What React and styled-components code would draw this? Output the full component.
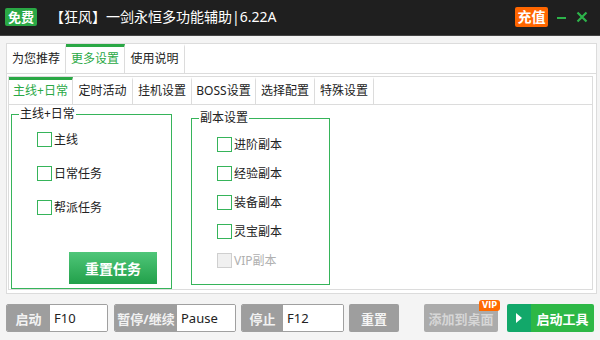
import React from 'react';
import styled, { createGlobalStyle } from 'styled-components';

const GlobalStyle = createGlobalStyle`
  html, body { margin: 0; padding: 0; }
  body {
    font-family: "Noto Sans", "Noto Sans CJK SC", sans-serif;
    font-size: 12px;
    color: #222;
  }
`;

const green = '#2aa845';
const frameGreen = '#36b45a';

const Window = styled.div`
  width: 600px;
  height: 340px;
  background: #f4f4f4;
  display: flex;
  flex-direction: column;
  overflow: hidden;
`;

const TitleBar = styled.div`
  height: 36px;
  flex-shrink: 0;
  background: #1f1f1f;
  border-bottom: 1px solid #444;
  display: flex;
  align-items: center;
  padding: 0 12px 1px 5px;
  box-sizing: border-box;
`;

const Badge = styled.span`
  display: inline-flex;
  align-items: center;
  justify-content: center;
  width: ${({ $w }) => $w}px;
  height: ${({ $h }) => $h}px;
  background: ${({ $bg }) => $bg};
  color: #fff;
  border-radius: 2px;
  font-size: ${({ $fs }) => $fs || 13}px;
  font-weight: bold;
  line-height: 1;
`;

const Title = styled.div`
  margin-left: 13px;
  color: #fff;
  font-size: 14px;
  line-height: 1;
  flex: 1;
`;

const WinButtons = styled.div`
  display: flex;
  align-items: center;
  gap: 8px;
`;

const Body = styled.div`
  padding: 7px 3px 0 6px;
`;

const OuterPanel = styled.div`
  height: 251px;
  box-sizing: border-box;
  border: 1px solid #dcdcdc;
  background: #fff;
  display: flex;
  flex-direction: column;
`;

const TabRow = styled.div`
  display: flex;
  height: ${({ $h }) => $h}px;
  border-bottom: 1px solid #dcdcdc;
  box-sizing: border-box;
  flex-shrink: 0;
`;

const Tab = styled.div`
  width: ${({ $w }) => $w}px;
  box-sizing: border-box;
  border-right: 1px solid #dcdcdc;
  border-top: 3px solid ${({ $active }) => ($active ? green : 'transparent')};
  color: ${({ $active }) => ($active ? green : '#222')};
  background: #fff;
  display: flex;
  align-items: center;
  justify-content: center;
  font-size: 12px;
  line-height: 1;
  padding-bottom: 2px;
`;

const OuterContent = styled.div`
  padding: 2px 3px 3px 1px;
  flex: 1;
  display: flex;
`;

const InnerPanel = styled.div`
  flex: 1;
  border: 1px solid #dcdcdc;
  display: flex;
  flex-direction: column;
`;

const Groups = styled.div`
  display: flex;
  align-items: flex-start;
  padding-left: 2px;
  gap: 19px;
`;

const Group = styled.div`
  position: relative;
  width: ${({ $w }) => $w}px;
  height: ${({ $h }) => $h}px;
  margin-top: ${({ $top }) => $top}px;
  box-sizing: border-box;
  border: 1px solid ${frameGreen};
  display: flex;
  flex-direction: column;
`;

const Legend = styled.span`
  position: absolute;
  top: -8px;
  left: 7px;
  background: #fff;
  padding: 0 1px;
  font-size: 12px;
  line-height: 14px;
  color: #222;
`;

const CheckList = styled.div`
  display: flex;
  flex-direction: column;
  gap: ${({ $gap }) => $gap}px;
  padding: ${({ $pt }) => $pt}px 0 0 25px;
`;

const CheckRow = styled.label`
  display: flex;
  align-items: center;
  gap: 2px;
  height: 15px;
  color: ${({ $disabled }) => ($disabled ? '#b0b0b0' : '#222')};
  font-size: 12px;
  line-height: 15px;
`;

const Box = styled.span`
  flex-shrink: 0;
  width: 15px;
  height: 15px;
  box-sizing: border-box;
  border: 1px solid ${({ $disabled }) => ($disabled ? '#cfcfcf' : frameGreen)};
  background: ${({ $disabled }) => ($disabled ? '#f0f0f0' : '#fff')};
`;

const GreenButton = styled.button`
  margin: auto 0 4px 57px;
  width: 88px;
  height: 32px;
  padding: 0;
  border: none;
  background: linear-gradient(#4fc679, #22a04a);
  color: #fff;
  font-family: inherit;
  font-size: 14px;
  font-weight: bold;
`;

const BottomBar = styled.div`
  display: flex;
  align-items: center;
  padding: 10px 0 0 6px;
`;

const KeyGroup = styled.div`
  display: flex;
  height: 28px;
  margin-right: ${({ $mr }) => $mr}px;
  border-radius: 2px;
  overflow: hidden;
  border: 1px solid #a0a0a0;
  box-sizing: border-box;
`;

const KeyLabel = styled.span`
  width: ${({ $w }) => $w}px;
  background: #9e9e9e;
  color: #f2f2f2;
  font-weight: bold;
  display: flex;
  align-items: center;
  justify-content: center;
  font-size: 13px;
`;

const KeyInput = styled.span`
  width: ${({ $w }) => $w}px;
  background: #fff;
  display: flex;
  align-items: center;
  padding-left: 4px;
  box-sizing: border-box;
  font-size: 13px;
  color: #222;
`;

const GrayButton = styled.div`
  position: relative;
  width: ${({ $w }) => $w}px;
  height: 28px;
  margin-right: ${({ $mr }) => $mr}px;
  border-radius: 2px;
  background: ${({ $light }) => ($light ? '#ababab' : '#9e9e9e')};
  color: ${({ $light }) => ($light ? '#d6d6d6' : '#f4f4f4')};
  font-weight: bold;
  display: flex;
  align-items: center;
  justify-content: center;
  font-size: 13px;
`;

const Vip = styled.span`
  position: absolute;
  top: -4px;
  right: -2px;
  background: #ff6a00;
  color: #fff;
  font-size: 8px;
  font-family: "DejaVu Sans", sans-serif;
  font-weight: bold;
  line-height: 11px;
  padding: 0 3px;
  border-radius: 3px 3px 3px 0;
`;

const StartButton = styled.div`
  display: flex;
  width: 87px;
  height: 28px;
  border-radius: 2px;
  overflow: hidden;
  color: #fff;
  font-weight: bold;
  font-size: 13px;
`;

const StartIcon = styled.span`
  width: 24px;
  background: #12a86a;
  display: flex;
  align-items: center;
  justify-content: center;
`;

const StartText = styled.span`
  flex: 1;
  background: #2db846;
  display: flex;
  align-items: center;
  justify-content: center;
`;

const outerTabs = [
  { label: '为您推荐', w: 59 },
  { label: '更多设置', w: 59, active: true },
  { label: '使用说明', w: 60 },
];

const innerTabs = [
  { label: '主线+日常', w: 64, active: true },
  { label: '定时活动', w: 60 },
  { label: '挂机设置', w: 59 },
  { label: 'BOSS设置', w: 64 },
  { label: '选择配置', w: 59 },
  { label: '特殊设置', w: 59 },
];

const dailyItems = ['主线', '日常任务', '帮派任务'];
const dungeonItems = [
  { label: '进阶副本' },
  { label: '经验副本' },
  { label: '装备副本' },
  { label: '灵宝副本' },
  { label: 'VIP副本', disabled: true },
];

const App = () => {
  return (
    <Window>
      <GlobalStyle />
      <TitleBar>
        <Badge $w={32} $h={18} $bg="#2aa845">免费</Badge>
        <Title>【狂风】一剑永恒多功能辅助|6.22A</Title>
        <WinButtons>
          <Badge $w={33} $h={20} $bg="#ff6600" $fs={14}>充值</Badge>
          <svg width="12" height="12" viewBox="0 0 12 12">
            <rect x="1" y="6" width="9" height="2" fill="#2db34a" />
          </svg>
          <svg width="12" height="12" viewBox="0 0 12 12">
            <path d="M1.5 1.5 L10.5 10.5 M10.5 1.5 L1.5 10.5" stroke="#2db34a" strokeWidth="2.2" />
          </svg>
        </WinButtons>
      </TitleBar>

      <Body>
        <OuterPanel>
          <TabRow $h={30}>
            {outerTabs.map((t) => (
              <Tab key={t.label} $w={t.w} $active={t.active}>{t.label}</Tab>
            ))}
          </TabRow>
          <OuterContent>
            <InnerPanel>
              <TabRow $h={28}>
                {innerTabs.map((t) => (
                  <Tab key={t.label} $w={t.w} $active={t.active}>{t.label}</Tab>
                ))}
              </TabRow>
              <Groups>
                <Group $w={161} $h={175} $top={9}>
                  <Legend>主线+日常</Legend>
                  <CheckList $gap={19} $pt={17}>
                    {dailyItems.map((label) => (
                      <CheckRow key={label}>
                        <Box />
                        {label}
                      </CheckRow>
                    ))}
                  </CheckList>
                  <GreenButton>重置任务</GreenButton>
                </Group>
                <Group $w={139} $h={167} $top={13}>
                  <Legend>副本设置</Legend>
                  <CheckList $gap={14} $pt={18}>
                    {dungeonItems.map((item) => (
                      <CheckRow key={item.label} $disabled={item.disabled}>
                        <Box $disabled={item.disabled} />
                        {item.label}
                      </CheckRow>
                    ))}
                  </CheckList>
                </Group>
              </Groups>
            </InnerPanel>
          </OuterContent>
        </OuterPanel>
      </Body>

      <BottomBar>
        <KeyGroup $mr={6}>
          <KeyLabel $w={43}>启动</KeyLabel>
          <KeyInput $w={57}>F10</KeyInput>
        </KeyGroup>
        <KeyGroup $mr={5}>
          <KeyLabel $w={62}>暂停/继续</KeyLabel>
          <KeyInput $w={58}>Pause</KeyInput>
        </KeyGroup>
        <KeyGroup $mr={5}>
          <KeyLabel $w={41}>停止</KeyLabel>
          <KeyInput $w={60}>F12</KeyInput>
        </KeyGroup>
        <GrayButton $w={50} $mr={25}>重置</GrayButton>
        <GrayButton $w={74} $mr={9} $light>
          添加到桌面
          <Vip>VIP</Vip>
        </GrayButton>
        <StartButton>
          <StartIcon>
            <svg width="8" height="10" viewBox="0 0 8 10">
              <path d="M1 0 L7 5 L1 10 Z" fill="#fff" />
            </svg>
          </StartIcon>
          <StartText>启动工具</StartText>
        </StartButton>
      </BottomBar>
    </Window>
  );
};

export default App;
